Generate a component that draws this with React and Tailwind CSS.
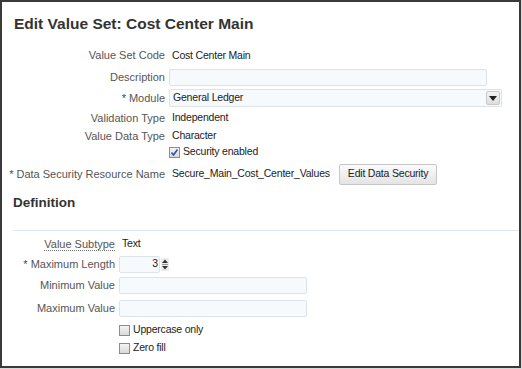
import React from 'react';

const font = { fontFamily: '"Liberation Sans", Arial, sans-serif' };

function Req() {
  return <span className="text-[#1d4f7c] mr-[3px]">*</span>;
}

function Checkbox({ checked }) {
  return (
    <span className="inline-flex w-[11px] h-[11px] items-center justify-center border border-[#8c8c8c] bg-gradient-to-b from-[#f4f4f4] to-[#d9d9d9] shrink-0">
      {checked && (
        <svg width="9" height="9" viewBox="0 0 9 9">
          <path d="M1.5 4.5 L3.5 7 L7.5 1.5" fill="none" stroke="#2b55a8" strokeWidth="1.6" />
        </svg>
      )}
    </span>
  );
}

function Row({ label, labelW, h, children, req, dotted }) {
  return (
    <div className="flex items-center" style={{ height: h }}>
      <div className="text-right text-[#555] shrink-0" style={{ width: labelW }}>
        {req && <Req />}
        {dotted ? (
          <span className="border-b border-dotted border-[#777] leading-[12px] inline-block">{label}</span>
        ) : (
          label
        )}
      </div>
      <div className="ml-[4px] flex items-center text-[#222] text-[10.5px] tracking-[-0.2px]">{children}</div>
    </div>
  );
}

function TextInput({ w }) {
  return <div className="h-[17px] rounded-[2px] border border-[#dde3e8] bg-[#f6fafd]" style={{ width: w }} />;
}

export default function App() {
  return (
    <div className="w-[522px] h-[369px] bg-[#d9d9d9]" style={font}>
      <div className="w-[521px] h-[368px] border-2 border-[#3a3a3a] bg-white text-[11px] flex flex-col">
        <div className="h-[43px] flex items-center pl-[12px] pt-[1px] text-[15.5px] font-bold text-[#333]">
          Edit Value Set: Cost Center Main
        </div>

        <div className="flex flex-col">
          <Row label="Value Set Code" labelW={163} h={21}>
            <span className="pl-[3px]">Cost Center Main</span>
          </Row>
          <Row label="Description" labelW={163} h={22}>
            <TextInput w={318} />
          </Row>
          <Row label="Module" labelW={163} h={20} req>
            <div className="w-[333px] h-[18px] rounded-[2px] border border-[#dde3e8] bg-[#f6fafd] flex items-center justify-between pl-[3px] pr-[1px]">
              <span>General Ledger</span>
              <span className="w-[14px] h-[14px] rounded-[2px] border border-[#c9c9c9] bg-gradient-to-b from-[#f4f4f4] to-[#dedede] flex items-center justify-center">
                <svg width="8" height="5" viewBox="0 0 8 5">
                  <path d="M0 0 H8 L4 5 Z" fill="#222" />
                </svg>
              </span>
            </div>
          </Row>
          <Row label="Validation Type" labelW={163} h={20}>
            <span className="pl-[3px]">Independent</span>
          </Row>
          <Row label="Value Data Type" labelW={163} h={16}>
            <span className="pl-[3px]">Character</span>
          </Row>
          <Row label="" labelW={163} h={16}>
            <div className="flex items-center gap-[3px]">
              <Checkbox checked />
              <span>Security enabled</span>
            </div>
          </Row>
          <Row label="Data Security Resource Name" labelW={163} h={28} req>
            <span className="pl-[3px]">Secure_Main_Cost_Center_Values</span>
            <button className="ml-[9px] h-[21px] px-[8px] rounded-[2px] border border-[#c6c6c6] bg-gradient-to-b from-[#fbfbfb] to-[#e4e4e4] text-[#222]">
              Edit Data Security
            </button>
          </Row>
        </div>

        <div className="h-[30px] flex items-center pl-[11px] text-[13.5px] font-bold text-[#333]">Definition</div>
        <div className="h-[12px]" />
        <div className="ml-[11px] h-px bg-[#dfe6ec]" />

        <div className="mt-[3px] flex flex-col">
          <Row label="Value Subtype" labelW={113} h={20} dotted>
            <span className="pl-[3px]">Text</span>
          </Row>
          <Row label="Maximum Length" labelW={113} h={20} req>
            <div className="w-[41px] h-[17px] rounded-[2px] border border-[#dde3e8] bg-[#f6fafd] flex items-center justify-end pr-[1px]">
              3
            </div>
            <svg width="8" height="13" viewBox="0 0 8 13" className="ml-[1px]">
              <rect x="0" y="0" width="8" height="13" fill="#ececec" />
              <path d="M1 5 L4 1.5 L7 5 Z" fill="#333" />
              <line x1="1" y1="6.5" x2="7" y2="6.5" stroke="#999" />
              <path d="M1 8 L4 11.5 L7 8 Z" fill="#333" />
            </svg>
          </Row>
          <Row label="Minimum Value" labelW={113} h={22}>
            <TextInput w={188} />
          </Row>
          <Row label="Maximum Value" labelW={113} h={24}>
            <TextInput w={188} />
          </Row>
          <Row label="" labelW={113} h={20}>
            <div className="flex items-center gap-[3px]">
              <Checkbox />
              <span>Uppercase only</span>
            </div>
          </Row>
          <Row label="" labelW={113} h={16}>
            <div className="flex items-center gap-[3px]">
              <Checkbox />
              <span>Zero fill</span>
            </div>
          </Row>
        </div>
      </div>
    </div>
  );
}
